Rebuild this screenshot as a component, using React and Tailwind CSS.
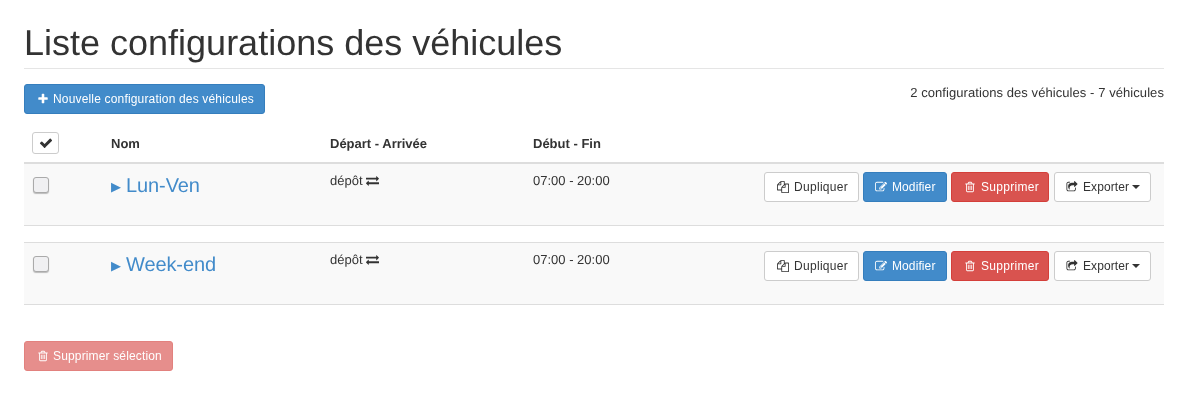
const icons = {
  plus: 'M1600 736v192q0 40-28 68t-68 28h-416v416q0 40-28 68t-68 28h-192q-40 0-68-28t-28-68v-416h-416q-40 0-68-28t-28-68v-192q0-40 28-68t68-28h416v-416q0-40 28-68t68-28h192q40 0 68 28t28 68v416h416q40 0 68 28t28 68z',
  check: 'M1671 566q0 40-28 68l-724 724-136 136q-28 28-68 28t-68-28l-136-136-362-362q-28-28-28-68t28-68l136-136q28-28 68-28t68 28l294 295 656-657q28-28 68-28t68 28l136 136q28 28 28 68z',
  exchange: 'M1792 1184v192q0 13-9.5 22.5t-22.5 9.5h-1376v192q0 13-9.5 22.5t-22.5 9.5q-12 0-24-10l-319-320q-9-9-9-22 0-14 9-23l320-320q9-9 23-9 13 0 22.5 9.5t9.5 22.5v192h1376q13 0 22.5 9.5t9.5 22.5zm0-544q0 14-9 23l-320 320q-9 9-23 9-13 0-22.5-9.5t-9.5-22.5v-192h-1376q-13 0-22.5-9.5t-9.5-22.5v-192q0-13 9.5-22.5t22.5-9.5h1376v-192q0-14 9-23t23-9q12 0 24 10l319 319q9 9 9 23z',
  files: 'M1696 384q40 0 68 28t28 68v1216q0 40-28 68t-68 28h-960q-40 0-68-28t-28-68v-288h-544q-40 0-68-28t-28-68v-672q0-40 20-88t48-76l408-408q28-28 76-48t88-20h416q40 0 68 28t28 68v328q68-40 128-40h416zm-544 213l-299 299h299v-299zm-640-384l-299 299h299v-299zm196 647l316-316v-416h-384v416q0 40-28 68t-68 28h-416v640h512v-256q0-40 20-88t48-76zm956 804v-1152h-384v416q0 40-28 68t-68 28h-416v640h896z',
  edit: 'M888 1184l116-116-152-152-116 116v56h96v96h56zm440-720q-16-16-33 1l-350 350q-17 17-1 33t33-1l350-350q17-17 1-33zm80 594v190q0 119-84.5 203.5t-203.5 84.5h-832q-119 0-203.5-84.5t-84.5-203.5v-832q0-119 84.5-203.5t203.5-84.5h832q63 0 117 25 15 7 18 23 3 17-9 29l-49 49q-14 14-32 8-23-6-45-6h-832q-66 0-113 47t-47 113v832q0 66 47 113t113 47h832q66 0 113-47t47-113v-126q0-13 9-22l64-64q15-15 35-7t20 29zm-96-738l288 288-672 672h-288v-288zm444 132l-92 92-288-288 92-92q28-28 68-28t68 28l152 152q28 28 28 68t-28 68z',
  trash: 'M704 736v576q0 14-9 23t-23 9h-64q-14 0-23-9t-9-23v-576q0-14 9-23t23-9h64q14 0 23 9t9 23zm256 0v576q0 14-9 23t-23 9h-64q-14 0-23-9t-9-23v-576q0-14 9-23t23-9h64q14 0 23 9t9 23zm256 0v576q0 14-9 23t-23 9h-64q-14 0-23-9t-9-23v-576q0-14 9-23t23-9h64q14 0 23 9t9 23zm128 724v-948h-896v948q0 22 7 40.5t14.5 27 10.5 8.5h832q3 0 10.5-8.5t14.5-27 7-40.5zm-672-1076h448l-48-117q-7-9-17-11h-317q-10 2-17 11zm928 32v64q0 14-9 23t-23 9h-96v948q0 83-47 143.5t-113 60.5h-832q-66 0-113-59.5t-47-142.5v-950h-96q-14 0-23-9t-9-23v-64q0-14 9-23t23-9h309l70-167q15-37 54-63t79-26h320q40 0 79 26t54 63l70 167h309q14 0 23 9t9 23z',
  share: 'M1472 989v259q0 119-84.5 203.5t-203.5 84.5h-832q-119 0-203.5-84.5t-84.5-203.5v-832q0-119 84.5-203.5t203.5-84.5h255q13 0 22.5 9.5t9.5 22.5q0 27-26 32-77 26-133 60-10 4-16 4h-112q-66 0-113 47t-47 113v832q0 66 47 113t113 47h832q66 0 113-47t47-113v-214q0-19 18-29 28-13 54-37 16-16 35-8 21 9 21 29zm237-496l-384 384q-18 19-45 19-12 0-25-5-39-17-39-59v-192h-160q-323 0-438 131-119 137-74 473 3 23-20 34-8 2-12 2-16 0-26-13-10-14-21-31t-39.5-68.5-49.5-99.5-38.5-114-17.5-122q0-49 3.5-91t14-90 28-88 47-81.5 68.5-74 94.5-61.5 124.5-48.5 159.5-30.5 196.5-11h160v-192q0-42 39-59 13-5 25-5 26 0 45 19l384 384q19 19 19 45t-19 45z',
}

function Icon({ name, className = 'w-3 h-3' }) {
  return (
    <svg viewBox="0 0 1792 1792" fill="currentColor" className={`shrink-0 ${className}`}>
      <path d={icons[name]} />
    </svg>
  )
}

const btn = 'h-[30px] flex items-center rounded-[3px] border text-xs'

function Row({ name }) {
  return (
    <div className="flex h-[62px] bg-[#f9f9f9] border-b border-[#ddd]">
      <div className="w-[87px] pl-[9px] pt-[13px]">
        <div className="w-4 h-4 rounded-[3px] border border-[#aaa] bg-[#f0f0f2] shadow-[0_1px_1px_rgba(0,0,0,0.25)]" />
      </div>
      <div className="w-[219px] pt-[8px] flex items-start text-[#428bca]">
        <span className="text-[13px] leading-[28px] mr-[5px] mt-px">▶</span>
        <span className="text-[20px] leading-[28px] tracking-[-0.1px]">{name}</span>
      </div>
      <div className="w-[203px] pt-[8px] flex items-start text-[13px] leading-[18px] text-[#333]">
        dépôt
        <Icon name="exchange" className="w-[13px] h-[13px] ml-[3px] mt-[2px]" />
      </div>
      <div className="w-[120px] pt-[8px] text-[13px] leading-[18px] text-[#333]">07:00 - 20:00</div>
      <div className="flex-1 flex justify-end gap-1 pt-[8px] pr-[13px]">
        <button className={`${btn} w-[95px] pl-3 gap-[5px] tracking-[0.3px] bg-white border-[#ccc] text-[#333]`}>
          <Icon name="files" /> Dupliquer
        </button>
        <button className={`${btn} w-[84px] pl-[11px] gap-[5px] tracking-[0.1px] bg-[#428bca] border-[#357ebd] text-white`}>
          <Icon name="edit" /> Modifier
        </button>
        <button className={`${btn} w-[98px] mr-px pl-3 gap-[5px] tracking-[0.3px] bg-[#d9534f] border-[#d43f3a] text-white`}>
          <Icon name="trash" /> Supprimer
        </button>
        <button className={`${btn} w-[97px] pl-[11px] gap-[5px] tracking-[0.1px] bg-white border-[#ccc] text-[#333]`}>
          <Icon name="share" />
          <span className="flex items-center gap-[3px]">
            Exporter
            <span className="w-0 h-0 border-x-4 border-t-4 border-x-transparent border-t-[#333]" />
          </span>
        </button>
      </div>
    </div>
  )
}

export default function App() {
  return (
    <div className="w-[1188px] h-[404px] bg-white px-6 font-['Liberation_Sans',Arial,sans-serif] text-[#333] overflow-hidden antialiased [text-rendering:geometricPrecision] [will-change:transform]">
      <h1 className="pt-[23px] pb-[5px] text-[36px] leading-[40px] font-normal border-b border-[#e5e5e5]">Liste configurations des véhicules</h1>

      <div className="flex justify-between items-start mt-[15px]">
        <button className={`${btn} w-[241px] pl-3 gap-1 tracking-[0.17px] bg-[#428bca] border-[#357ebd] text-white`}>
          <Icon name="plus" /> Nouvelle configuration des véhicules
        </button>
        <div className="text-[13px] leading-[18px] tracking-[0.07px]">2 configurations des véhicules - 7 véhicules</div>
      </div>

      <div className="flex h-[32px] mt-[18px] border-b-2 border-[#ddd] text-[13px] font-bold">
        <div className="w-[87px] pl-2">
          <div className="w-[27px] h-[22px] flex items-center justify-center bg-white border border-[#ccc] rounded-[3px] text-xs">
            <Icon name="check" className="w-[14px] h-[14px]" />
          </div>
        </div>
        <div className="w-[219px] pt-[3px] leading-[18px]">Nom</div>
        <div className="w-[203px] pt-[3px] leading-[18px]">Départ - Arrivée</div>
        <div className="pt-[3px] leading-[18px]">Début - Fin</div>
      </div>

      <Row name="Lun-Ven" />
      <div className="h-[17px] border-b border-[#ddd]" />
      <Row name="Week-end" />

      <button className={`${btn} w-[149px] mt-9 pl-3 gap-1 tracking-[0.15px] bg-[#d9534f] border-[#d43f3a] text-white opacity-65`}>
        <Icon name="trash" /> Supprimer sélection
      </button>
    </div>
  )
}
